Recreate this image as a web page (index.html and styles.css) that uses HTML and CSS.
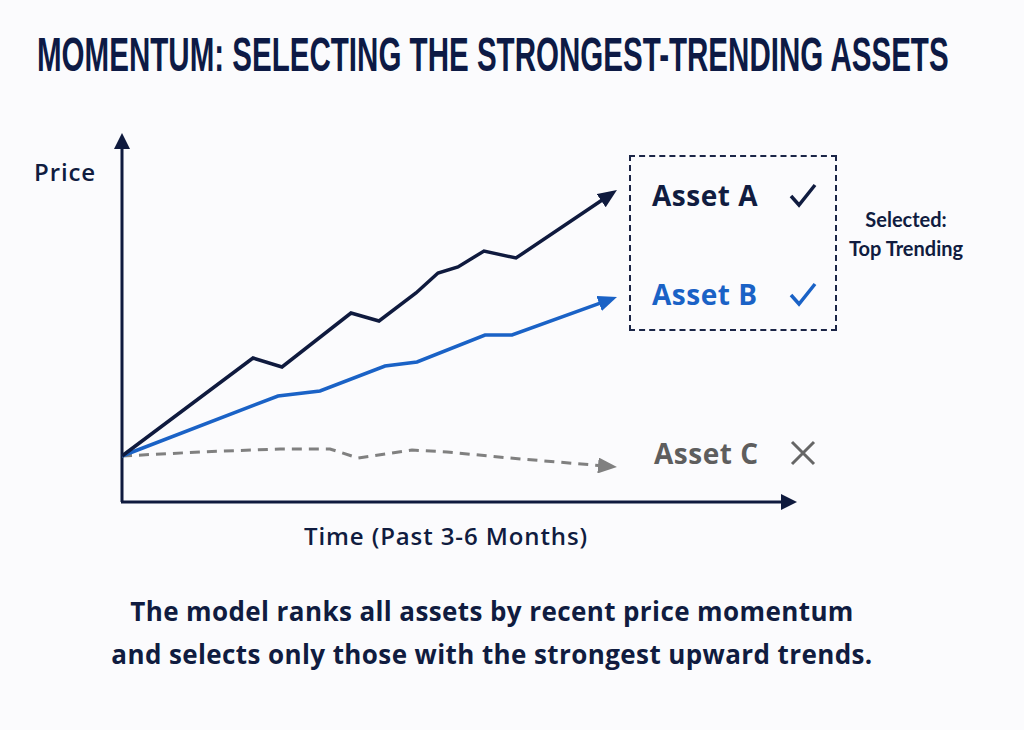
FILE: index.html
```html
<!DOCTYPE html>
<html lang="en">
<head>
<meta charset="utf-8">
<title>Momentum</title>
<link rel="stylesheet" href="styles.css">
</head>
<body>
<main class="page">
  <header class="header">
    <h1 class="title">MOMENTUM: SELECTING THE STRONGEST-TRENDING ASSETS</h1>
  </header>

  <section class="diagram">
    <svg class="plot" width="1024" height="450" viewBox="0 0 1024 450" xmlns="http://www.w3.org/2000/svg">
      <defs>
        <marker id="ahNavy" markerUnits="userSpaceOnUse" markerWidth="20" markerHeight="16" refX="7" refY="8" orient="auto">
          <path d="M0,0 L19,8 L0,16 Z" fill="#0f1a3e"/>
        </marker>
        <marker id="ahBlue" markerUnits="userSpaceOnUse" markerWidth="20" markerHeight="16" refX="7" refY="8" orient="auto">
          <path d="M0,0 L19,8 L0,16 Z" fill="#1a62c6"/>
        </marker>
        <marker id="ahGray" markerUnits="userSpaceOnUse" markerWidth="20" markerHeight="16" refX="7" refY="8" orient="auto">
          <path d="M0,0 L19,8 L0,16 Z" fill="#808080"/>
        </marker>
        <marker id="ahAxis" markerUnits="userSpaceOnUse" markerWidth="20" markerHeight="16" refX="7" refY="8" orient="auto">
          <path d="M0,0 L16,8 L0,16 Z" fill="#0f1a3e"/>
        </marker>
      </defs>
      <!-- axes -->
      <polyline points="122,392 122,32" fill="none" stroke="#0f1a3e" stroke-width="3" marker-end="url(#ahAxis)"/>
      <polyline points="121,392 788,392" fill="none" stroke="#0f1a3e" stroke-width="3" marker-end="url(#ahAxis)"/>
      <!-- asset C -->
      <polyline points="122,346 200,342 280,339 330,339 358,348 412,340 447,342 510,348 605,356" fill="none" stroke="#808080" stroke-width="3" stroke-dasharray="10 7" marker-end="url(#ahGray)"/>
      <!-- asset B -->
      <polyline points="122,346 278,286 320,281 385,256 417,252 485,225 512,225 605.7,191.1" fill="none" stroke="#1a62c6" stroke-width="3.5" stroke-linejoin="miter" marker-end="url(#ahBlue)"/>
      <!-- asset A -->
      <polyline points="122,346 253,248 282,257 351,203 379,211 416,183 438,163 458,157 484,141 516,148 607,86.7" fill="none" stroke="#0f1a3e" stroke-width="3.5" marker-end="url(#ahNavy)"/>
    </svg>

    <span class="axis-label price">Price</span>
    <span class="axis-label time">Time (Past 3-6 Months)</span>

    <div class="selection">
      <div class="select-box">
        <div class="asset-row asset-a">
          <span>Asset A</span>
          <svg class="mark" width="30" height="26" viewBox="0 0 30 26"><path d="M3,14 L11,23 L27,3" fill="none" stroke="currentColor" stroke-width="3.5" stroke-linejoin="miter"/></svg>
        </div>
        <div class="asset-row asset-b">
          <span>Asset B</span>
          <svg class="mark" width="30" height="26" viewBox="0 0 30 26"><path d="M3,14 L11,23 L27,3" fill="none" stroke="currentColor" stroke-width="3.5" stroke-linejoin="miter"/></svg>
        </div>
      </div>
      <p class="select-note">Selected:<br>Top Trending</p>
    </div>

    <div class="asset-row asset-c">
      <span>Asset C</span>
      <svg class="mark" width="26" height="26" viewBox="0 0 26 26"><path d="M2,2 L24,24 M24,2 L2,24" fill="none" stroke="currentColor" stroke-width="3"/></svg>
    </div>
  </section>

  <p class="caption">The model ranks all assets by recent price momentum<br>and selects only those with the strongest upward trends.</p>
</main>
</body>
</html>
```

FILE: styles.css
```css
html, body {
  margin: 0;
  padding: 0;
  background: #fbfbfd;
}

.page {
  width: 1024px;
  height: 730px;
  overflow: hidden;
  font-family: "Open Sans", Lato, "Liberation Sans", sans-serif;
  color: #101c40;
}

.header {
  height: 110px;
  box-sizing: border-box;
  padding: 31px 0 0 37px;
}

.title {
  display: inline-block;
  margin: 0;
  font-family: "Liberation Sans Narrow", "Liberation Sans", sans-serif;
  font-weight: 700;
  font-size: 49px;
  line-height: 47px;
  color: #0d1a45;
  white-space: nowrap;
  transform: scaleX(0.603);
  transform-origin: left center;
}

.diagram {
  position: relative;
  height: 450px;
}

.plot {
  position: absolute;
  left: 0;
  top: 0;
}

.axis-label {
  position: absolute;
  font-size: 24px;
  line-height: 30px;
  font-weight: 600;
  letter-spacing: 0.9px;
  white-space: nowrap;
}

.price {
  left: 34px;
  top: 47px;
}

.time {
  left: 246px;
  width: 400px;
  text-align: center;
  top: 411px;
}

.selection {
  position: absolute;
  left: 629px;
  top: 45px;
  display: flex;
  align-items: center;
  gap: 12px;
}

.select-box {
  width: 208px;
  height: 176px;
  box-sizing: border-box;
  border: 2px dashed #1b2547;
  padding: 20px 17px 17px 21px;
  display: flex;
  flex-direction: column;
  justify-content: space-between;
}

.asset-row {
  display: flex;
  justify-content: space-between;
  align-items: center;
  height: 36px;
  font-size: 28px;
  font-weight: 700;
  letter-spacing: 0.5px;
  white-space: nowrap;
}

.asset-a {
  color: #101c40;
}

.asset-b {
  color: #1a62c6;
}

.asset-c {
  position: absolute;
  left: 654px;
  top: 325px;
  width: 162px;
  color: #5e5e5e;
}

.asset-c .mark {
  color: #666666;
}

.select-note {
  margin: 0 0 19px 0;
  font-family: Lato, "Open Sans", sans-serif;
  font-size: 20px;
  line-height: 29px;
  font-weight: 700;
  text-align: center;
  color: #101c40;
  white-space: nowrap;
}

.caption {
  margin: 30px 0 0 0;
  padding-right: 40px;
  text-align: center;
  font-size: 26px;
  line-height: 43px;
  font-weight: 700;
  letter-spacing: 0.4px;
  color: #101c40;
}
```
